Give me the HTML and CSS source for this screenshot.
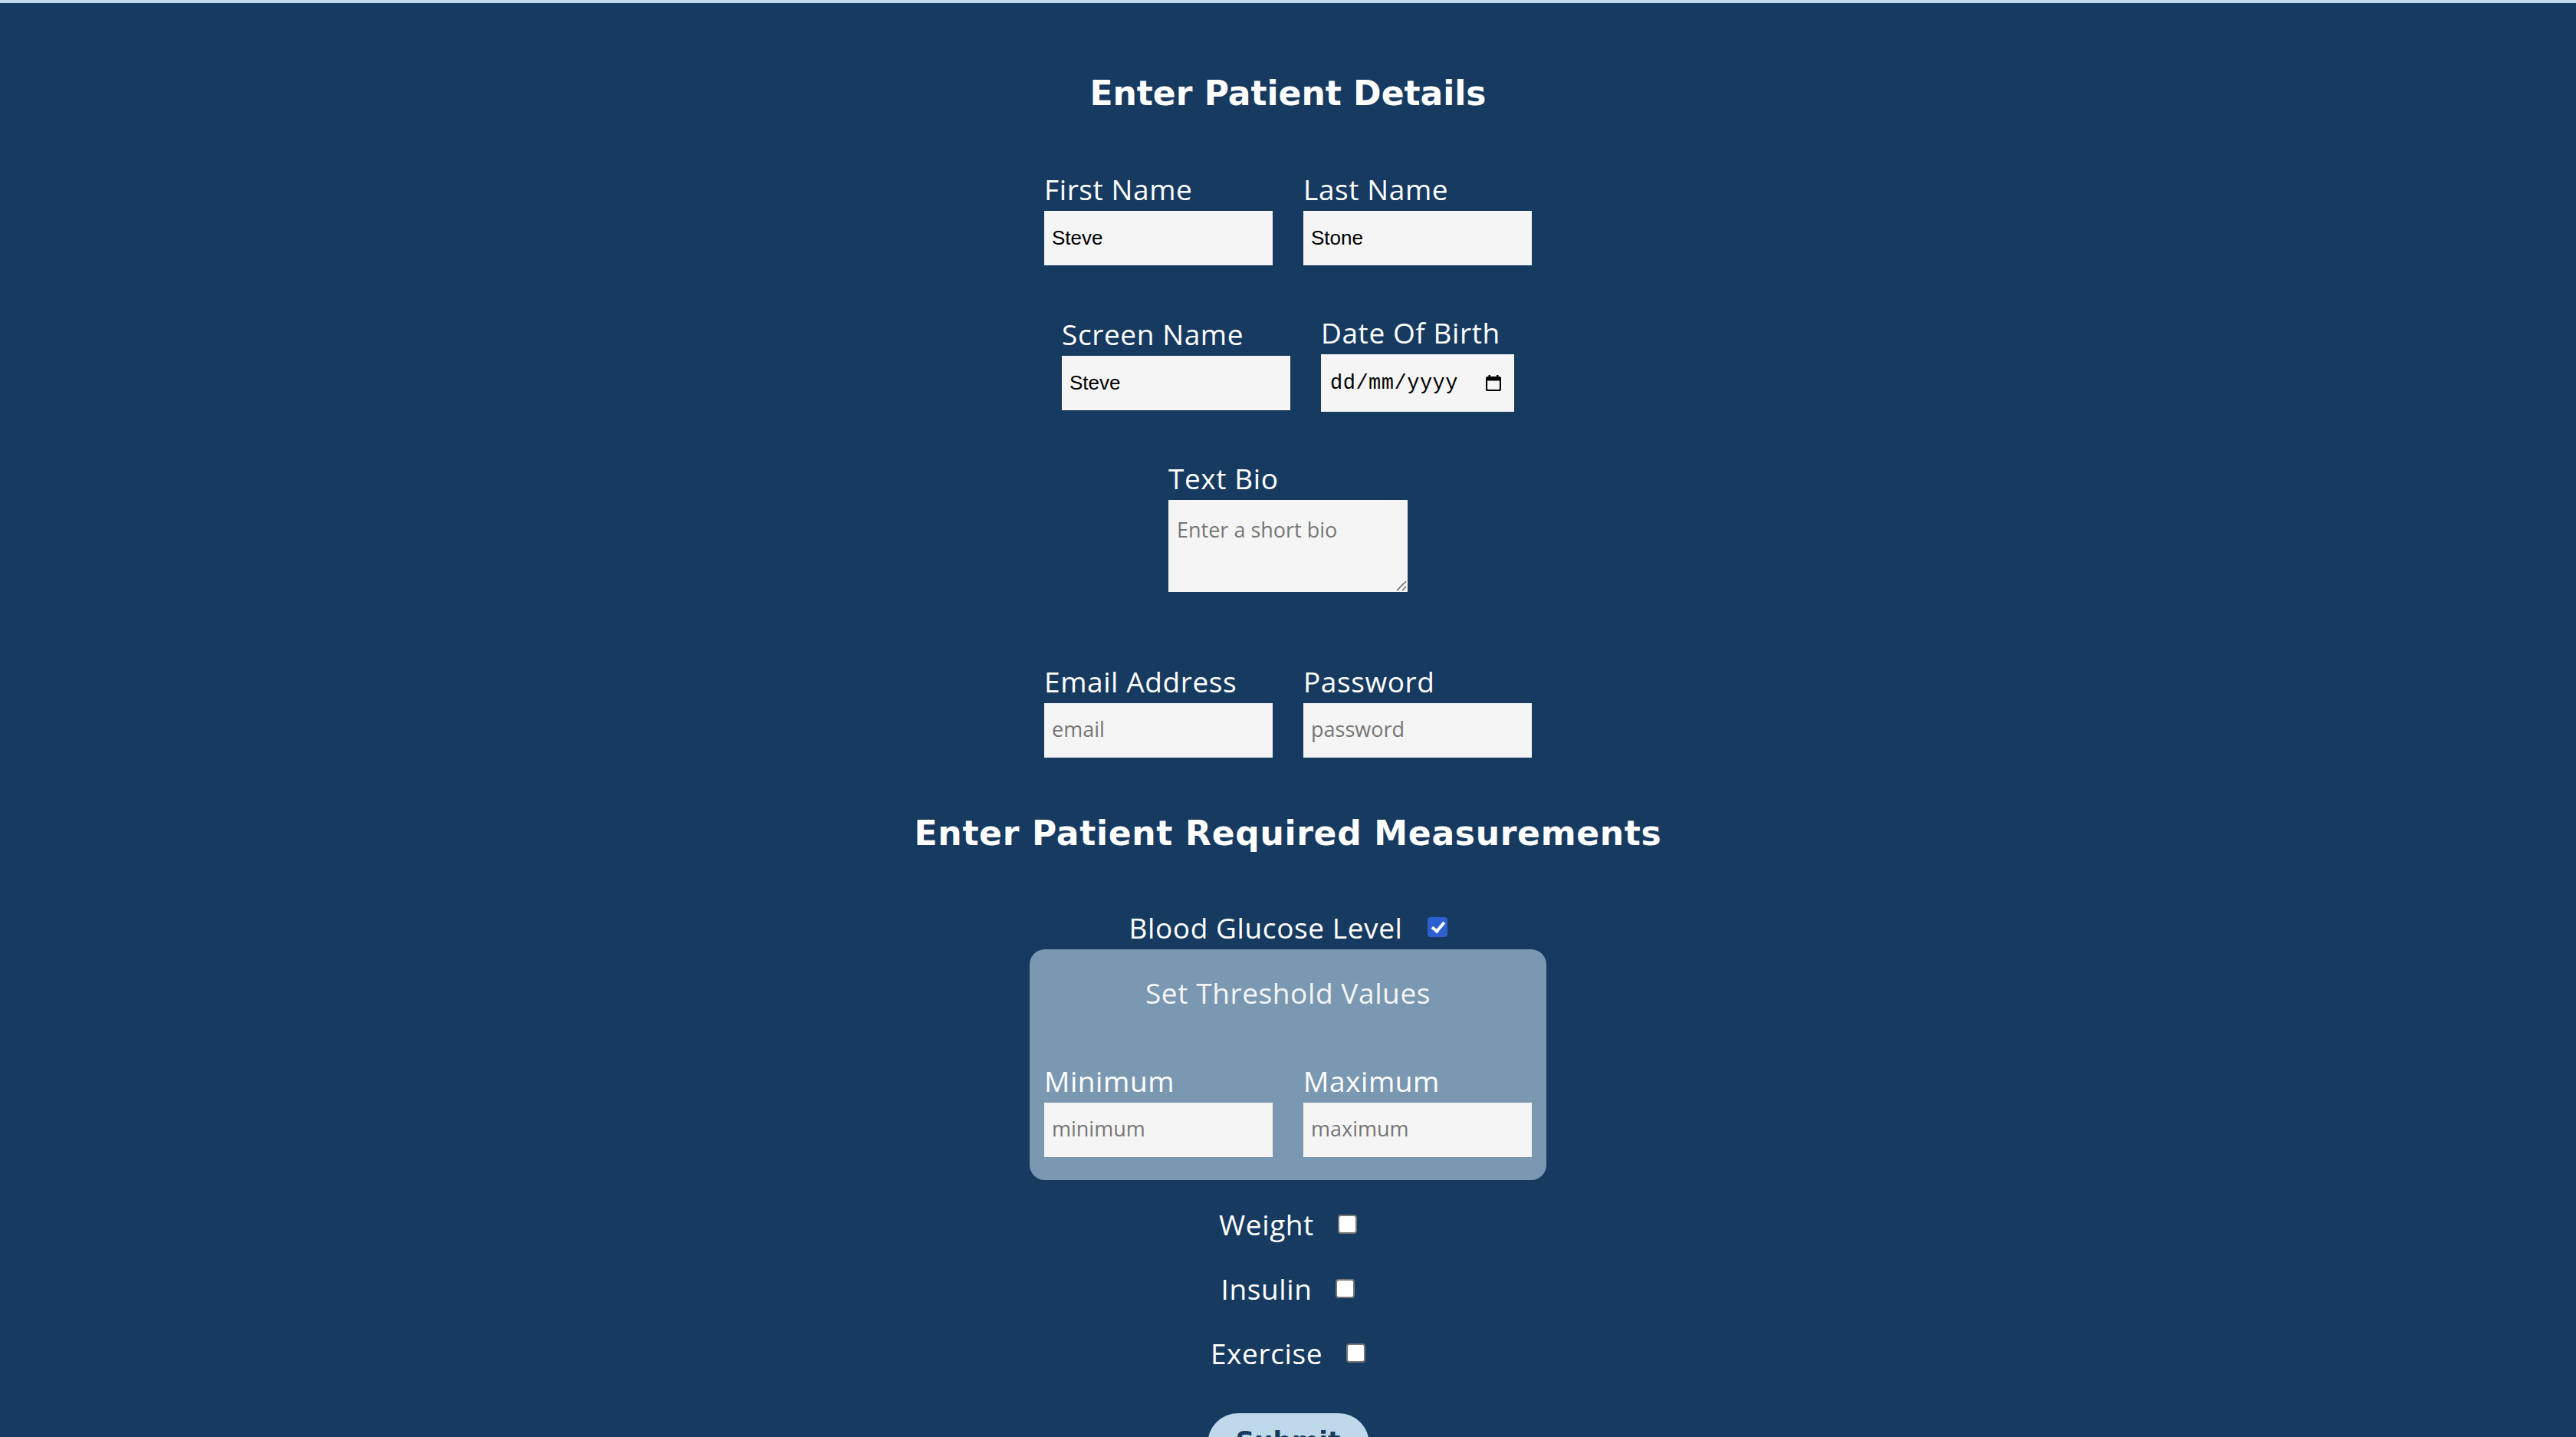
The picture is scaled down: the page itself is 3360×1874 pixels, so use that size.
FILE: index.html
```html
<!DOCTYPE html>
<html lang="en">
<head>
<meta charset="utf-8">
<title>Enter Patient Details</title>
<link rel="stylesheet" href="styles.css">
</head>
<body>
<main class="page">
  <h1 class="title">Enter Patient Details</h1>

  <div class="row row-first">
    <div class="field">
      <label class="label" for="fn">First Name</label>
      <input class="input" id="fn" type="text" value="Steve">
    </div>
    <div class="field">
      <label class="label" for="ln">Last Name</label>
      <input class="input" id="ln" type="text" value="Stone">
    </div>
  </div>

  <div class="row row-second">
    <div class="field">
      <label class="label" for="sn">Screen Name</label>
      <input class="input" id="sn" type="text" value="Steve">
    </div>
    <div class="field">
      <label class="label">Date Of Birth</label>
      <div class="date-input">
        <span class="date-text">dd/mm/yyyy</span>
        <svg class="cal-icon" width="20" height="21" viewBox="0 0 20 21" aria-hidden="true">
          <rect x="3.5" y="0" width="2.5" height="4" fill="#000"/>
          <rect x="14" y="0" width="2.5" height="4" fill="#000"/>
          <rect x="1" y="3" width="18" height="17" rx="1.5" fill="none" stroke="#000" stroke-width="2.2"/>
          <rect x="1" y="3" width="18" height="4.5" fill="#000"/>
        </svg>
      </div>
    </div>
  </div>

  <div class="field bio-field">
    <label class="label" for="bio">Text Bio</label>
    <div class="bio-wrap">
      <textarea class="bio" id="bio" placeholder="Enter a short bio"></textarea>
      <svg class="grip" width="14" height="14" viewBox="0 0 14 14" aria-hidden="true">
        <line x1="1" y1="13" x2="13" y2="1" stroke="#6b6b6b" stroke-width="1.6"/>
        <line x1="8" y1="13" x2="13" y2="8" stroke="#6b6b6b" stroke-width="1.6"/>
      </svg>
    </div>
  </div>

  <div class="row row-email">
    <div class="field">
      <label class="label" for="em">Email Address</label>
      <input class="input" id="em" type="email" placeholder="email">
    </div>
    <div class="field">
      <label class="label" for="pw">Password</label>
      <input class="input" id="pw" type="password" placeholder="password">
    </div>
  </div>

  <h2 class="title title-second">Enter Patient Required Measurements</h2>

  <div class="check-row check-glucose">
    <span class="check-label">Blood Glucose Level</span>
    <input class="check check-on" type="checkbox" checked aria-label="Blood Glucose Level">
  </div>

  <div class="threshold">
    <div class="threshold-title">Set Threshold Values</div>
    <div class="row threshold-row">
      <div class="field">
        <label class="label" for="min">Minimum</label>
        <input class="input" id="min" type="text" placeholder="minimum">
      </div>
      <div class="field">
        <label class="label" for="max">Maximum</label>
        <input class="input" id="max" type="text" placeholder="maximum">
      </div>
    </div>
  </div>

  <div class="check-row check-weight">
    <span class="check-label">Weight</span>
    <input class="check" type="checkbox" aria-label="Weight">
  </div>
  <div class="check-row check-next">
    <span class="check-label">Insulin</span>
    <input class="check" type="checkbox" aria-label="Insulin">
  </div>
  <div class="check-row check-next">
    <span class="check-label">Exercise</span>
    <input class="check" type="checkbox" aria-label="Exercise">
  </div>

  <button class="submit" type="button">Submit</button>
</main>
</body>
</html>
```

FILE: styles.css
```css
html, body {
  margin: 0;
  padding: 0;
}

body {
  background: #173a60;
  border-top: 4px solid #c0d9ec;
  font-family: "Open Sans", "DejaVu Sans", sans-serif;
  color: #ffffff;
  min-height: 1870px;
}

.page {
  display: flex;
  flex-direction: column;
  align-items: center;
}

.title {
  margin: 84px 0 0;
  font-family: "DejaVu Sans", "Open Sans", sans-serif;
  font-size: 44px;
  line-height: 68px;
  font-weight: 700;
  color: #ffffff;
  letter-spacing: 0;
}

.title-second {
  margin-top: 65px;
  letter-spacing: 0.7px;
}

.row {
  display: flex;
  justify-content: center;
  align-items: center;
  gap: 40px;
}

.row-first {
  margin-top: 65px;
}

.row-second {
  margin-top: 62px;
}

.row-email {
  margin-top: 91px;
}

.field {
  display: flex;
  flex-direction: column;
  align-items: flex-start;
}

.label {
  font-size: 37px;
  line-height: 48px;
  letter-spacing: 0.6px;
  padding-top: 2px;
  margin-bottom: 4px;
  color: #ffffff;
  white-space: nowrap;
}

.input {
  box-sizing: border-box;
  width: 298px;
  height: 71px;
  border: none;
  outline: none;
  margin: 0;
  padding: 0 10px;
  background: #f5f5f5;
  color: #000000;
  font-family: "Liberation Sans", Arial, sans-serif;
  font-size: 26px;
}

.input::placeholder {
  font-family: "Open Sans", sans-serif;
  font-size: 27px;
  color: #767676;
}

.date-input {
  box-sizing: border-box;
  width: 252px;
  height: 75px;
  background: #f5f5f5;
  display: flex;
  align-items: center;
  justify-content: space-between;
  padding: 0 17px 0 12px;
}

.date-text {
  font-family: "Liberation Mono", "Courier New", monospace;
  font-size: 27px;
  color: #000000;
  letter-spacing: 0.5px;
}

.cal-icon {
  display: block;
}

.bio-field {
  margin-top: 61px;
}

.bio-wrap {
  position: relative;
  width: 312px;
  height: 120px;
}

.bio {
  box-sizing: border-box;
  width: 312px;
  height: 120px;
  border: none;
  outline: none;
  margin: 0;
  padding: 21px 11px 10px;
  background: #f5f5f5;
  font-family: "Open Sans", sans-serif;
  font-size: 27px;
  line-height: 36px;
  display: block;
  resize: none;
}

.bio::placeholder {
  color: #767676;
}

.grip {
  position: absolute;
  right: 1px;
  bottom: 1px;
}

.check-row {
  display: flex;
  align-items: center;
  gap: 31px;
}

.check-glucose {
  margin-top: 64px;
  gap: 32px;
}

.check-weight {
  margin-top: 33px;
}

.check-next {
  margin-top: 36px;
}

.check-label {
  font-size: 37px;
  line-height: 46px;
  padding-top: 2px;
  letter-spacing: 0.6px;
  color: #ffffff;
}

.check {
  appearance: none;
  -webkit-appearance: none;
  box-sizing: border-box;
  width: 25px;
  height: 25px;
  margin: 0;
  border: 2px solid #767676;
  border-radius: 4px;
  background: #ffffff;
  position: relative;
}

.check-on {
  width: 26px;
  height: 26px;
  border: none;
  background: #2c5fcf;
}

.check-on::after {
  content: "";
  position: absolute;
  left: 9px;
  top: 3px;
  width: 6px;
  height: 13px;
  border-right: 4px solid #ffffff;
  border-bottom: 4px solid #ffffff;
  transform: rotate(40deg);
}

.threshold {
  box-sizing: border-box;
  width: 674px;
  margin-top: 5px;
  padding: 32px 19px 30px;
  background: #7b98b2;
  border-radius: 20px;
  display: flex;
  flex-direction: column;
  align-items: center;
}

.threshold-title {
  font-size: 37px;
  line-height: 46px;
  padding-top: 2px;
  letter-spacing: 0.6px;
  color: #f5f5f5;
}

.threshold-row {
  margin-top: 66px;
}

.submit {
  margin-top: 55px;
  width: 211px;
  padding: 12px 0 20px;
  border: none;
  border-radius: 40px;
  background: #c0d9ea;
  color: #173a60;
  font-family: "DejaVu Sans", sans-serif;
  font-size: 34px;
  line-height: 48px;
  font-weight: 700;
}
```
